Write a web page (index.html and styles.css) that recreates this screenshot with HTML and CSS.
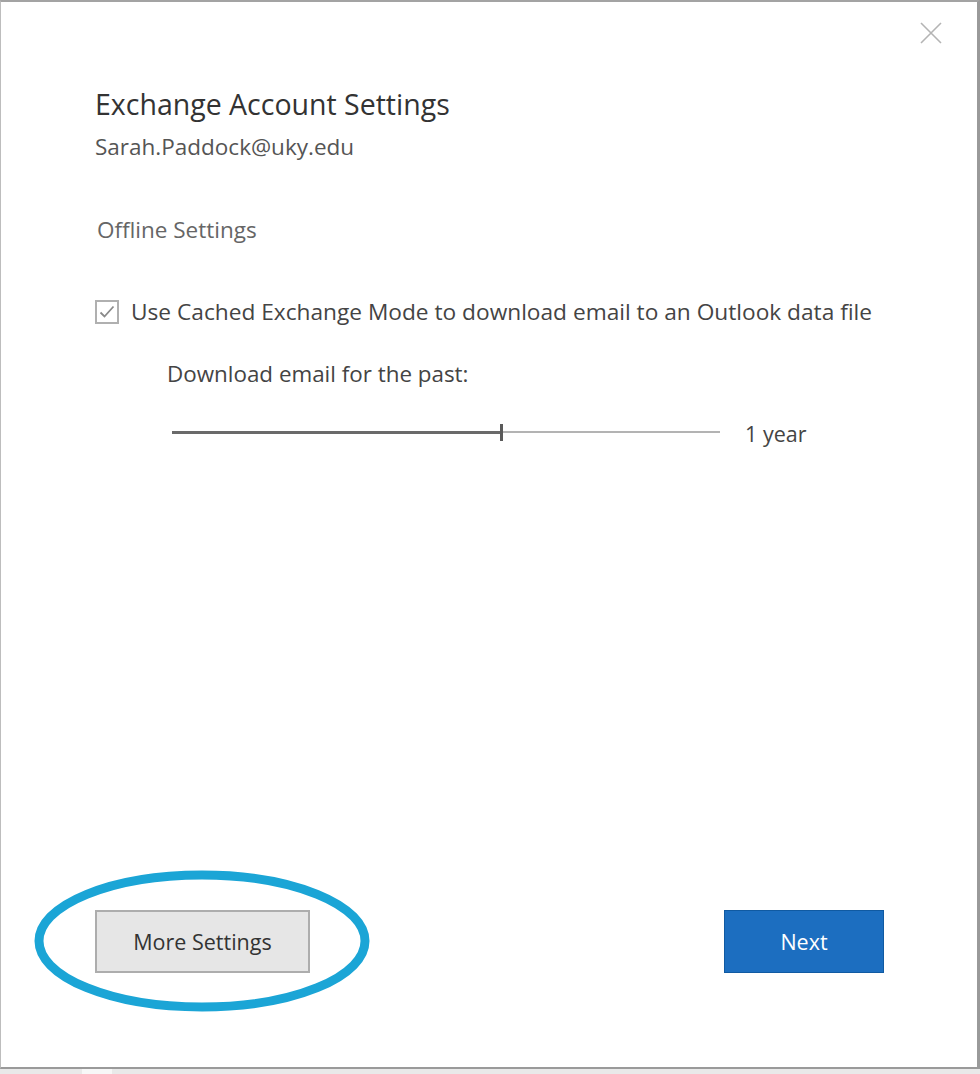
FILE: index.html
```html
<!DOCTYPE html>
<html lang="en">
<head>
  <meta charset="UTF-8">
  <meta name="viewport" content="width=device-width, initial-scale=1.0">
  <title>Exchange Account Settings</title>
  <link rel="stylesheet" href="styles.css">
</head>
<body>
  <div class="dialog">
    <div class="topbar">
      <button class="close" aria-label="Close">
        <svg width="22" height="22" viewBox="0 0 22 22">
          <path d="M1 1 L21 21 M21 1 L1 21" stroke="#b4b4b4" stroke-width="1.6" fill="none"/>
        </svg>
      </button>
    </div>

    <div class="content">
      <h1>Exchange Account Settings</h1>
      <div class="email">Sarah.Paddock@uky.edu</div>

      <h2>Offline Settings</h2>

      <label class="check-row">
        <span class="checkbox">
          <svg width="16" height="14" viewBox="0 0 16 14">
            <path d="M1.5 7.5 L5.5 11.5 L14.5 1.5" stroke="#8a8a8a" stroke-width="1.8" fill="none"/>
          </svg>
        </span>
        <span>Use Cached Exchange Mode to download email to an Outlook data file</span>
      </label>

      <div class="download">
        <div class="download-label">Download email for the past:</div>
        <div class="slider-row">
          <div class="slider">
            <div class="track-fill"></div>
            <div class="thumb"></div>
            <div class="track-rest"></div>
          </div>
          <span class="slider-value">1 year</span>
        </div>
      </div>
    </div>

    <div class="actions">
      <button class="btn btn-secondary">More Settings</button>
      <button class="btn btn-primary">Next</button>
    </div>

    <svg class="highlight" width="344" height="150" viewBox="0 0 344 150">
      <ellipse cx="172" cy="75" rx="163" ry="66" stroke="#1ba5d6" stroke-width="9" fill="none"/>
    </svg>
  </div>
  <div class="taskbar">
    <span class="tab"></span>
  </div>
</body>
</html>
```

FILE: styles.css
```css
body {
  margin: 0;
  padding: 0;
  font-family: 'Open Sans', 'Noto Sans', sans-serif;
  background-color: #fff;
  overflow: hidden;
}
.dialog {
  position: relative;
  box-sizing: border-box;
  width: 980px;
  height: 1069px;
  background-color: #fff;
  border-top: 2px solid #a3a3a3;
  border-left: 1px solid #bdbdbd;
  border-right: 3px solid #9a9a9a;
  border-bottom: 2px solid #9a9a9a;
  display: flex;
  flex-direction: column;
}
.topbar {
  display: flex;
  justify-content: flex-end;
  padding: 20px 35px 0 0;
}
.close {
  background: none;
  border: none;
  padding: 0;
  width: 22px;
  height: 22px;
  cursor: pointer;
}
.content {
  padding: 0 0 0 94px;
}
h1 {
  font-size: 28.5px;
  font-weight: 400;
  color: #333;
  margin: 42px 0 0 0;
  line-height: 36px;
}
.email {
  font-size: 22.5px;
  color: #555;
  margin-top: 11px;
  line-height: 28px;
}
h2 {
  font-size: 22.5px;
  font-weight: 400;
  color: #666;
  margin: 55px 0 0 2px;
  line-height: 28px;
}
.check-row {
  display: flex;
  align-items: center;
  gap: 12px;
  margin-top: 54px;
  font-size: 22.7px;
  color: #444;
  line-height: 28px;
}
.checkbox {
  box-sizing: border-box;
  width: 24px;
  height: 24px;
  border: 2px solid #b0b0b0;
  display: flex;
  align-items: center;
  justify-content: center;
}
.download {
  padding-left: 72px;
}
.download-label {
  font-size: 22.4px;
  color: #444;
  margin-top: 34px;
  line-height: 28px;
}
.slider-row {
  display: flex;
  align-items: center;
  margin-top: 30px;
  padding-left: 5px;
}
.slider {
  display: flex;
  align-items: center;
  width: 548px;
  height: 18px;
}
.track-fill {
  width: 328px;
  height: 3px;
  background-color: #6a6a6a;
}
.thumb {
  width: 3px;
  height: 17px;
  background-color: #5a5a5a;
}
.track-rest {
  flex: 1;
  height: 2px;
  background-color: #b3b3b3;
}
.slider-value {
  font-size: 21.5px;
  color: #444;
  margin-left: 25px;
  line-height: 28px;
  position: relative;
  top: 2px;
}
.actions {
  margin-top: auto;
  display: flex;
  justify-content: space-between;
  padding: 0 93px 94px 94px;
}
.btn {
  font-family: 'Open Sans', 'Noto Sans', sans-serif;
  font-size: 21.5px;
  height: 63px;
  cursor: pointer;
}
.btn-secondary {
  width: 215px;
  background-color: #e6e6e6;
  border: 2px solid #adadad;
  color: #333;
}
.btn-primary {
  width: 160px;
  background-color: #1c6ec0;
  border: 1px solid #105aa2;
  color: #fff;
}
.highlight {
  position: absolute;
  left: 29px;
  top: 864px;
}
.taskbar {
  height: 5px;
  background-color: #e9e9e9;
  position: relative;
}
.tab {
  position: absolute;
  left: 82px;
  top: 0;
  width: 30px;
  height: 5px;
  background-color: #f7f7f7;
  border-right: 13px solid #e9e9e9;
  box-shadow: 14px 0 0 -12px #999;
}
```
